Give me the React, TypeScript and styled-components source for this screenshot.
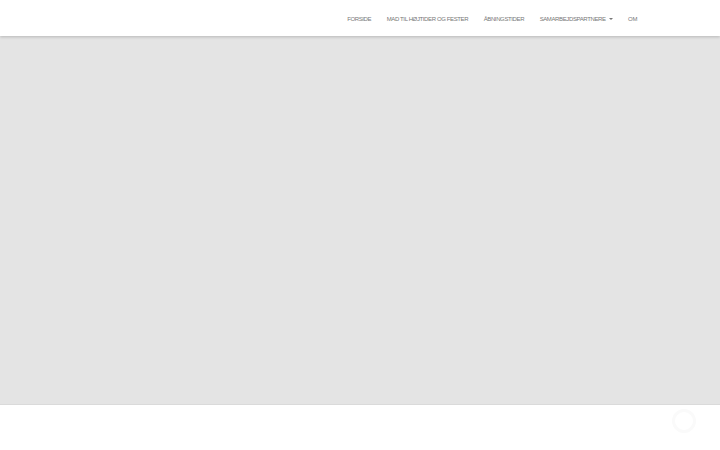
import React from 'react';
import styled, { createGlobalStyle } from 'styled-components';

const GlobalStyle = createGlobalStyle`
  html, body {
    margin: 0;
    padding: 0;
    background: #ffffff;
    font-family: 'Liberation Sans', Arial, sans-serif;
  }
`;

const Page = styled.div`
  display: flex;
  flex-direction: column;
  height: 450px;
  overflow: hidden;
`;

const Header = styled.header`
  position: relative;
  z-index: 2;
  height: 36px;
  box-sizing: border-box;
  padding: 1px 83px 0 0;
  background: #ffffff;
  box-shadow: 0 1px 3px rgba(0, 0, 0, 0.2);
  display: flex;
  justify-content: flex-end;
  align-items: center;
`;

const Nav = styled.nav`
  display: flex;
  align-items: center;
  gap: 15.5px;
`;

const NavItem = styled.a`
  font-size: 6px;
  letter-spacing: -0.38px;
  color: #777777;
  text-transform: uppercase;
  text-decoration: none;
  display: flex;
  align-items: center;
  gap: 3px;
  white-space: nowrap;
`;

const Caret = styled.span`
  width: 0;
  height: 0;
  border-left: 2px solid transparent;
  border-right: 2px solid transparent;
  border-top: 2px solid #777777;
`;

const Hero = styled.section`
  height: 368px;
  background: #e4e4e4;
  border-bottom: 1px solid #dadada;
`;

const Footer = styled.div`
  flex: 1;
  position: relative;
  background: #ffffff;
`;

const ScrollTop = styled.div`
  position: absolute;
  right: 24px;
  top: 4px;
  width: 24px;
  height: 24px;
  border-radius: 50%;
  border: 3px solid #fafafa;
  box-sizing: border-box;
`;

const items = ['Forside', 'Mad til højtider og fester', 'Åbningstider'];

const App = () => (
  <Page>
    <GlobalStyle />
    <Header>
      <Nav>
        {items.map(item => (
          <NavItem key={item} href="#">
            {item}
          </NavItem>
        ))}
        <NavItem href="#">
          Samarbejdspartnere <Caret />
        </NavItem>
        <NavItem href="#">Om</NavItem>
      </Nav>
    </Header>
    <Hero />
    <Footer>
      <ScrollTop />
    </Footer>
  </Page>
);

export default App;
